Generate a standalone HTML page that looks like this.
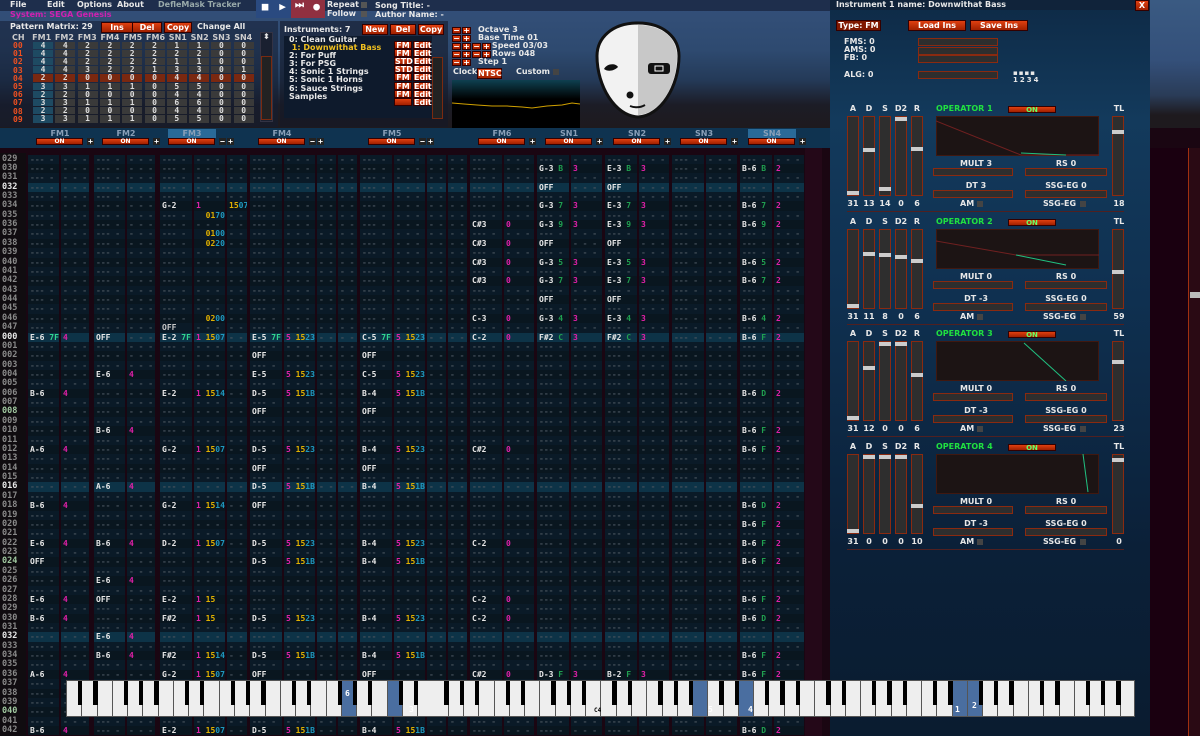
<!DOCTYPE html>
<html><head><meta charset="utf-8"><style>
*{margin:0;padding:0;box-sizing:border-box}
body{width:1200px;height:736px;overflow:hidden;background:#1a0612;font-family:"DejaVu Sans Mono","Liberation Mono",monospace;font-weight:bold;font-size:8px;color:#ddd;position:relative}
.a{position:absolute;white-space:nowrap}
.t{font-family:"DejaVu Sans","Liberation Sans",sans-serif;font-weight:bold;font-size:8px;color:#e8e8e8}
.btn{position:absolute;background:linear-gradient(#e04010,#a02000);border:1px solid #300;color:#fff;font-family:"DejaVu Sans",sans-serif;font-weight:bold;font-size:8px;text-align:center;line-height:9px}
.m{color:#e020a8}.y{color:#e0b000}.c{color:#2098c0}.g{color:#30d890}.gg{color:#20a050}.w{color:#e8e8e8}.o{color:#c8c8c8}
.cell{position:absolute;background:#0a1a27;color:#47525c;overflow:hidden;padding-left:2px;line-height:9.37px;height:9.37px}
.hl{background:#0d3347}
.sl{position:absolute;background:#2e2e2e;border:1px solid #8a2a10}
.hd{position:absolute;background:#ccc;height:4px;left:-1px;right:-1px}
.k{position:absolute;background:#eee;border-right:1px solid #555;top:0;height:35px;width:15.3px}
.bk{position:absolute;background:#000;top:0;height:24px;width:8px}
</style></head><body>
<div class="a" style="left:0;top:0;width:1200px;height:128px;background:linear-gradient(#34507a 0,#2e4a70 50px,#243a58 80px,#1c1c26 105px,#1e1a1e 128px)"></div>
<div class="a" style="left:0;top:0;width:830px;height:11px;background:#1e2e4c"></div>
<div class="a t" style="left:10px;top:0">File</div>
<div class="a t" style="left:47px;top:0">Edit</div>
<div class="a t" style="left:77px;top:0">Options</div>
<div class="a t" style="left:117px;top:0">About</div>
<div class="a t" style="left:158px;top:0;color:#9aa">DefleMask Tracker</div>
<div class="a" style="left:256px;top:0;width:18px;height:18px;background:#2a4a80;color:#fff;font-size:11px;text-align:center">■</div>
<div class="a" style="left:274px;top:0;width:17px;height:18px;background:#2a4a80;color:#fff;font-size:11px;text-align:center">▶</div>
<div class="a" style="left:291px;top:0;width:17px;height:18px;background:#903040;color:#fff;font-size:10px;text-align:center">⏭</div>
<div class="a" style="left:308px;top:0;width:17px;height:18px;background:#903040;color:#fff;font-size:11px;text-align:center">●</div>
<div class="a t" style="left:327px;top:0">Repeat</div><div class="a t" style="left:327px;top:9px">Follow</div>
<div class="a" style="left:361px;top:2px;width:6px;height:6px;background:#555"></div><div class="a" style="left:361px;top:11px;width:6px;height:6px;background:#555"></div>
<div class="a t" style="left:375px;top:1px">Song Title: -</div><div class="a t" style="left:375px;top:10px">Author Name: -</div>
<div class="a t" style="left:10px;top:10px;color:#d020b0">System: SEGA Genesis</div>
<div class="a" style="left:0;top:21px;width:278px;height:106px;background:rgba(20,30,50,.55)"></div>
<div class="a t" style="left:10px;top:22px">Pattern Matrix: 29</div>
<div class="btn" style="left:101px;top:22px;width:32px">Ins</div>
<div class="btn" style="left:132px;top:22px;width:30px">Del</div>
<div class="btn" style="left:164px;top:22px;width:28px">Copy</div>
<div class="a t" style="left:197px;top:22px">Change All</div>
<div class="a t" style="left:12px;top:33px;color:#ccc;word-spacing:1px">CH&nbsp;&nbsp;FM1 FM2 FM3 FM4 FM5 FM6 SN1 SN2 SN3 SN4</div>
<div class="a" style="left:260px;top:32px;width:13px;height:90px;background:#1a2030;border:1px solid #334"></div>
<div class="a" style="left:261px;top:56px;width:11px;height:64px;border:1px solid #7a2a10;background:#222"></div>
<div class="a t" style="left:263px;top:32px;font-size:8px">⬍</div>
<div class="a" style="left:280px;top:21px;width:168px;height:106px;background:rgba(20,25,40,.6)"></div>
<div class="a t" style="left:284px;top:25px">Instruments: 7</div>
<div class="btn" style="left:362px;top:24px;width:26px">New</div>
<div class="btn" style="left:390px;top:24px;width:26px">Del</div>
<div class="btn" style="left:418px;top:24px;width:26px">Copy</div>
<div class="a" style="left:284px;top:36px;width:148px;height:82px;background:#0e1a2c"></div>
<div class="a t" style="left:289px;top:36px;line-height:8.1px;font-size:8px">0: Clean Guitar<br><span style="color:#f0c020">&nbsp;1: Downwithat Bass</span><br>2: For Puff<br>3: For PSG<br>4: Sonic 1 Strings<br>5: Sonic 1 Horns<br>6: Sauce Strings<br>Samples</div>
<div class="a" style="left:432px;top:57px;width:11px;height:62px;border:1px solid #7a2a10;background:#222"></div>
<div class="a t" style="left:478px;top:26px;line-height:8px">Octave 3<br>Base Time 01<br>&nbsp;&nbsp;&nbsp;&nbsp;&nbsp;Speed 03/03<br>&nbsp;&nbsp;&nbsp;&nbsp;&nbsp;Rows 048<br>Step 1</div>
<div class="a t" style="left:453px;top:67px">Clock</div><div class="btn" style="left:477px;top:68px;width:25px">NTSC</div>
<div class="a t" style="left:516px;top:67px">Custom</div><div class="a" style="left:553px;top:69px;width:6px;height:6px;background:#444"></div>
<div class="a" style="left:452px;top:80px;width:128px;height:48px;background:linear-gradient(#0e4050,#000 40%,#000)"></div>
<svg class="a" style="left:452px;top:80px" width="128" height="48"><polyline fill="none" stroke="#d0a000" stroke-width="1" points="0,23 12,24 25,25 40,26 55,26 70,27 80,28 95,26 110,25 120,23 128,24"/></svg>
<svg class="a" style="left:592px;top:20px" width="92" height="100"><path d="M46 3C20 3 5 18 5 36c0 30 18 60 41 61 23-1 41-31 41-61C87 18 72 3 46 3z" fill="#f2f2f2" stroke="#111" stroke-width="3"/><path d="M46 5C70 5 85 18 85 36c0 30-17 58-39 59z" fill="#c8c8c8"/><path d="M12 49c3-6 12-6 14-2-4 4-10 5-14 2z" fill="#111"/><rect x="56" y="43" width="22" height="11" rx="3" fill="#111"/><rect x="63" y="46" width="8" height="5" fill="none" stroke="#fff"/><circle cx="38" cy="75" r="3.5" fill="#111"/><path d="M38 86q8 3 15-1" stroke="#111" stroke-width="2" fill="none"/></svg>
<div class="a" style="left:0;top:128px;width:830px;height:20px;background:#0f3350"></div>
<div class="a" style="left:0;top:148px;width:830px;height:588px;background:#1a0612"></div>
<div class="a" style="left:0;top:153px;width:26px;height:583px;background:#100c10"></div>
<div class="a" style="left:805px;top:148px;width:17px;height:588px;background:#240818"></div>
<div class="a" style="left:1150px;top:0;width:50px;height:128px;background:linear-gradient(#3a5a82,#34507a 60px,#2a3c58 95px,#1e1a1e 115px)"></div>
<div class="a" style="left:1150px;top:148px;width:50px;height:588px;background:#1a0010"></div>
<div class="a" style="left:1188px;top:148px;width:12px;height:588px;background:#2a0a14;border-left:1px solid #a03010"></div>
<div class="a" style="left:1190px;top:292px;width:10px;height:6px;background:#bbb"></div>
<div class="a" style="left:830px;top:0;width:320px;height:736px;background:linear-gradient(#0e2a46,#133a5c 120px,#0f3050 300px,#0b2038 550px,#0a1c30)"></div>
<div class="a" style="left:830px;top:0;width:320px;height:10px;background:#10233a"></div>
<div class="a t" style="left:836px;top:0">Instrument 1 name: Downwithat Bass</div>
<div class="btn" style="left:1135px;top:0;width:14px">X</div>
<div class="btn" style="left:836px;top:20px;width:45px;background:#801800">Type: FM</div>
<div class="btn" style="left:908px;top:20px;width:58px">Load Ins</div>
<div class="btn" style="left:970px;top:20px;width:58px">Save Ins</div>
<div class="a t" style="left:844px;top:38px;line-height:8.2px">FMS: 0<br>AMS: 0<br>FB: 0</div>
<div class="a t" style="left:844px;top:70px">ALG: 0</div>
<div class="sl" style="left:918px;top:38px;width:80px;height:8px"></div><div class="sl" style="left:918px;top:47px;width:80px;height:8px"></div><div class="sl" style="left:918px;top:55px;width:80px;height:8px"></div><div class="sl" style="left:918px;top:71px;width:80px;height:8px"></div>
<div class="a t" style="left:1013px;top:69px;font-size:7px;letter-spacing:1px">▪▪▪▪</div><div class="a t" style="left:1013px;top:76px;font-size:7px;letter-spacing:2px">1234</div>
<script>
function h(s){document.body.insertAdjacentHTML('beforeend',s)}
var M=[[4,4,2,2,2,2,1,1,0,0],[4,4,2,2,2,2,2,2,0,0],[4,4,2,2,2,2,1,1,0,0],[4,4,3,2,2,1,3,3,0,1],[2,2,0,0,0,0,4,4,0,0],[3,3,1,1,1,0,5,5,0,0],[2,2,0,0,0,0,4,4,0,0],[3,3,1,1,1,0,6,6,0,0],[2,2,0,0,0,0,4,4,0,0],[3,3,1,1,1,0,5,5,0,0]],s='';
for(var r=0;r<10;r++){var y=41+r*8.2;s+='<div class="a" style="left:13px;top:'+y+'px;color:#f05020;font-size:8px">0'+r+'</div>';
for(var c=0;c<10;c++){var bg=r==4?'#7a2810':(c==0?'#1e4a62':'#3a3a3a');s+='<div class="a" style="left:'+(33+c*22.3)+'px;top:'+(y+0.5)+'px;width:20px;height:7.4px;background:'+bg+';text-align:center;line-height:7.5px;color:#ddd">'+M[r][c]+'</div>';}}
h(s);
s='';var ty=['FM','FM','STD','STD','FM','FM','FM',''];for(var i=0;i<8;i++){s+='<div class="btn" style="left:394px;top:'+(41+i*8.1)+'px;width:18px;height:8px;line-height:7px">'+ty[i]+'</div><div class="btn" style="left:413px;top:'+(41+i*8.1)+'px;width:18px;height:8px;line-height:7px">Edit</div>'}h(s);
s='';var cy=[26,34,42,50,58],cn=[2,2,4,4,2];for(i=0;i<5;i++)for(var j=0;j<cn[i];j++)s+='<div class="btn" style="left:'+(452+j*10)+'px;top:'+(cy[i]+1)+'px;width:9px;height:7px;line-height:6px">'+(j%2?'+':'−')+'</div>';h(s);
var CH=[['FM1',28,92,0],['FM2',94,158,0],['FM3',160,248,1],['FM4',250,358,1],['FM5',360,468,1],['FM6',470,535,0],['SN1',537,603,0],['SN2',605,670,0],['SN3',672,738,0],['SN4',740,805,0]];
s='';CH.forEach(function(c,i){var lx=c[1]+8;
s+='<div class="a t" style="left:'+lx+'px;top:129px;width:48px;text-align:center;color:#8aa0b8;background:'+(i==2||i==9?'#2a6a98':'transparent')+'">'+c[0]+'</div>';
s+='<div class="btn" style="left:'+lx+'px;top:138px;width:47px;height:7px;line-height:6px;font-size:6px">ON</div>';
if(c[3])s+='<div class="a" style="left:'+(lx+51)+'px;top:138px;color:#fff;background:#222;width:7px;height:7px;line-height:7px;font-size:8px;text-align:center">−</div><div class="a" style="left:'+(lx+59)+'px;top:138px;color:#fff;background:#222;width:7px;height:7px;line-height:7px;font-size:8px;text-align:center">+</div>';
else s+='<div class="a" style="left:'+(lx+51)+'px;top:138px;color:#fff;background:#222;width:7px;height:7px;line-height:7px;font-size:8px;text-align:center">+</div>';});h(s);
var C=[[28,31],[61,28],[94,31],[127,28],[160,32],[194,31],[227,20],[250,32],[284,31],[317,19],[338,19],[360,32],[394,31],[427,19],[448,19],[470,32],[504,30],[537,32],[571,31],[605,32],[639,30],[672,32],[706,31],[740,32],[774,30]];
function n(t){return '<span class="w">'+t+'</span>'}
function nv(t,v){return n(t)+' <span class="g">'+v+'</span>'}
function f(i,a,b){return '<span class="m">'+i+'</span>'+(a?' <span class="y">'+a+'</span>':'')+(b?'<span class="c">'+b+'</span>':'')}
function sn(t,v){return n(t)+' <span class="gg">'+v+'</span>'}
var D={};function d(r,c,t){(D[r]=D[r]||{})[c]=t}
function snrow(i,v,p){d(i,17,sn('G-3',v));d(i,18,f(3));d(i,19,sn('E-3',v));d(i,20,f(3));if(p)d(i,23,sn('B-6',v)),d(i,24,f(2))}
snrow(1,'B',1);d(3,17,n('OFF'));d(3,19,n('OFF'));d(5,4,n('G-2'));d(5,5,f(1));d(5,6,'<span class="y">15</span><span class="c">07</span>');snrow(5,'7',1);
d(6,5,'&nbsp;&nbsp;<span class="y">01</span><span class="c">70</span>');d(7,15,n('C#3'));d(7,16,f(0,'17','01'));snrow(7,'9',1);
d(8,5,'&nbsp;&nbsp;<span class="y">01</span><span class="c">00</span>');d(9,5,'&nbsp;&nbsp;<span class="y">02</span><span class="c">20</span>');d(9,15,n('C#3'));d(9,16,f(0));d(9,17,n('OFF'));d(9,19,n('OFF'));
d(11,15,n('C#3'));d(11,16,f(0));snrow(11,'5',1);d(13,15,n('C#3'));d(13,16,f(0));snrow(13,'7',1);d(15,17,n('OFF'));d(15,19,n('OFF'));
d(17,5,'&nbsp;&nbsp;<span class="y">02</span><span class="c">00</span>');d(17,15,n('C-3'));d(17,16,f(0));snrow(17,'4',1);d(18,4,'<span class="o">OFF</span>');
var B=19;function m(r,c,t){d(B+r,c,t)}
m(0,0,nv('E-6','7F'));m(0,1,f(4,'15','17'));m(0,2,n('OFF'));m(0,4,nv('E-2','7F'));m(0,5,f(1,'15','07'));m(0,7,nv('E-5','7F'));m(0,8,f(5,'15','23'));m(0,11,nv('C-5','7F'));m(0,12,f(5,'15','23'));m(0,15,n('C-2'));m(0,16,f(0,'17','01'));m(0,17,sn('F#2','C'));m(0,18,f(3));m(0,19,sn('F#2','C'));m(0,20,f(3,'04','58'));m(0,23,sn('B-6','F'));m(0,24,f(2));
function p4(r,a,b,c,dd){m(r,7,n(a));if(b)m(r,8,f(5,'15',b));m(r,11,n(c));if(dd)m(r,12,f(5,'15',dd))}
p4(2,'OFF',0,'OFF',0);m(4,2,n('E-6'));m(4,3,f(4,'15','1F'));p4(4,'E-5','23','C-5','23');
m(6,0,n('B-6'));m(6,1,f(4));m(6,4,n('E-2'));m(6,5,f(1,'15','14'));p4(6,'D-5','1B','B-4','1B');m(6,23,sn('B-6','D'));m(6,24,f(2));
p4(8,'OFF',0,'OFF',0);m(10,2,n('B-6'));m(10,3,f(4));m(10,23,sn('B-6','F'));m(10,24,f(2));
m(12,0,n('A-6'));m(12,1,f(4));m(12,4,n('G-2'));m(12,5,f(1,'15','07'));p4(12,'D-5','23','B-4','23');m(12,15,n('C#2'));m(12,16,f(0));m(12,23,sn('B-6','F'));m(12,24,f(2));
p4(14,'OFF',0,'OFF',0);m(16,2,n('A-6'));m(16,3,f(4));p4(16,'D-5','1B','B-4','1B');
m(18,0,n('B-6'));m(18,1,f(4));m(18,4,n('G-2'));m(18,5,f(1,'15','14'));m(18,7,n('OFF'));m(18,23,sn('B-6','D'));m(18,24,f(2));m(20,23,sn('B-6','F'));m(20,24,f(2));
m(22,0,n('E-6'));m(22,1,f(4));m(22,2,n('B-6'));m(22,3,f(4));m(22,4,n('D-2'));m(22,5,f(1,'15','07'));p4(22,'D-5','23','B-4','23');m(22,15,n('C-2'));m(22,16,f(0));m(22,23,sn('B-6','F'));m(22,24,f(2));
m(24,0,n('OFF'));p4(24,'D-5','1B','B-4','1B');m(24,23,sn('B-6','F'));m(24,24,f(2));m(26,2,n('E-6'));m(26,3,f(4));
m(28,0,n('E-6'));m(28,1,f(4,'15','17'));m(28,2,n('OFF'));m(28,4,n('E-2'));m(28,5,f(1,'15'));m(28,15,n('C-2'));m(28,16,f(0));m(28,23,sn('B-6','F'));m(28,24,f(2));
m(30,0,n('B-6'));m(30,1,f(4));m(30,4,n('F#2'));m(30,5,f(1,'15'));p4(30,'D-5','23','B-4','23');m(30,15,n('C-2'));m(30,16,f(0));m(30,23,sn('B-6','D'));m(30,24,f(2));
m(32,2,n('E-6'));m(32,3,f(4,'15','1F'));m(34,2,n('B-6'));m(34,3,f(4));m(34,4,n('F#2'));m(34,5,f(1,'15','14'));p4(34,'D-5','1B','B-4','1B');m(34,23,sn('B-6','F'));m(34,24,f(2));
m(36,0,n('A-6'));m(36,1,f(4));m(36,4,n('G-2'));m(36,5,f(1,'15','07'));p4(36,'OFF',0,'OFF',0);m(36,15,n('C#2'));m(36,16,f(0));m(36,17,sn('D-3','F'));m(36,18,f(3));m(36,19,sn('B-2','F'));m(36,20,f(3,'04','00'));m(36,23,sn('B-6','F'));m(36,24,f(2));
m(42,0,n('B-6'));m(42,1,f(4));m(42,4,n('E-2'));m(42,5,f(1,'15','07'));p4(42,'D-5','1B','B-4','1B');m(42,23,sn('B-6','D'));m(42,24,f(2));
s='';for(var r=0;r<62;r++){var y=154.5+r*9.37;var num=r<19?29+r:r-19;var hl=(r>=19&&(num%16==0))||r==3;var ns=('00'+num).slice(-3);
var nc=hl?'#e8e8e8':((r>=19&&num%8==0)?'#a0c8a0':'#8a8a8a');
s+='<div class="a" style="left:2px;top:'+y+'px;line-height:9.37px;color:'+nc+';font-size:8.5px">'+ns+'</div>';
C.forEach(function(c,i){var isN=(i==0||i==2||i==4||i==7||i==11||i==15||i==17||i==19||i==21||i==23);var txt=(D[r]&&D[r][i])||(isN?'--- -':(c[1]<25?'- -':'- - -'));
s+='<div class="cell'+(hl?' hl':'')+'" style="left:'+c[0]+'px;top:'+y+'px;width:'+c[1]+'px;'+(r%2&&!hl?'background:#09161f':'')+'">'+txt+'</div>'});}
h(s);
var V=[[31,13,14,0,6,18,'MULT 3','DT 3',[1,.42,.94,0,.4],.13],[31,11,8,0,6,59,'MULT 0','DT -3',[1,.3,.32,.35,.4],.5],[31,12,0,0,6,23,'MULT 0','DT -3',[1,.33,0,0,.42],.2],[31,0,0,0,10,0,'MULT 0','DT -3',[1,0,0,0,.67],0]];
s='';V.forEach(function(o,k){var y0=103+k*112.5;['A','D','S','D2','R'].forEach(function(l,j){var x=847+j*16;
s+='<div class="a t" style="left:'+(x-3)+'px;top:'+(y0+1)+'px;width:18px;text-align:center">'+l+'</div><div class="sl" style="left:'+x+'px;top:'+(y0+13)+'px;width:12px;height:80px"><div class="hd" style="top:'+(o[8][j]*74)+'px"></div></div><div class="a t" style="left:'+(x-3)+'px;top:'+(y0+96)+'px;width:18px;text-align:center">'+o[j]+'</div>'});
s+='<div class="a t" style="left:1110px;top:'+(y0+1)+'px;width:18px;text-align:center">TL</div><div class="sl" style="left:1112px;top:'+(y0+13)+'px;width:12px;height:80px"><div class="hd" style="top:'+(o[9]*74+3)+'px"></div></div><div class="a t" style="left:1110px;top:'+(y0+96)+'px;width:18px;text-align:center">'+o[5]+'</div>';
s+='<div class="a t" style="left:936px;top:'+(y0+1)+'px;color:#20e040">OPERATOR '+(k+1)+'</div><div class="btn" style="left:1008px;top:'+(y0+3)+'px;width:48px;height:7px;line-height:6px;font-size:7px;color:#6f6">ON</div>';
s+='<div class="a" style="left:936px;top:'+(y0+13)+'px;width:163px;height:40px;background:#1c1414;border:1px solid #401810"></div>';
s+='<div class="a t" style="left:936px;top:'+(y0+56)+'px;width:80px;text-align:center">'+o[6]+'</div><div class="a t" style="left:1025px;top:'+(y0+56)+'px;width:82px;text-align:center">RS 0</div>';
s+='<div class="sl" style="left:933px;top:'+(y0+65)+'px;width:80px;height:8px"></div><div class="sl" style="left:1025px;top:'+(y0+65)+'px;width:82px;height:8px"></div>';
s+='<div class="a t" style="left:936px;top:'+(y0+78)+'px;width:80px;text-align:center">'+o[7]+'</div><div class="a t" style="left:1025px;top:'+(y0+78)+'px;width:82px;text-align:center">SSG-EG 0</div>';
s+='<div class="sl" style="left:933px;top:'+(y0+87)+'px;width:80px;height:8px"></div><div class="sl" style="left:1025px;top:'+(y0+87)+'px;width:82px;height:8px"></div>';
s+='<div class="a t" style="left:960px;top:'+(y0+96)+'px">AM</div><div class="a" style="left:977px;top:'+(y0+98)+'px;width:6px;height:6px;background:#444"></div><div class="a t" style="left:1043px;top:'+(y0+96)+'px">SSG-EG</div><div class="a" style="left:1080px;top:'+(y0+98)+'px;width:6px;height:6px;background:#444"></div>';
s+='<div class="a" style="left:847px;top:'+(y0+108)+'px;width:277px;height:1px;background:#502020"></div>';});
h(s);
h('<svg class="a" style="left:936px;top:116px" width="163" height="40"><path d="M0 5L85 39L163 39" stroke="#702020" fill="none"/><path d="M85 37L130 39" stroke="#20c080"/></svg><svg class="a" style="left:936px;top:229px" width="163" height="40"><path d="M0 12L80 26L163 26" stroke="#702020" fill="none"/><path d="M80 26L130 36" stroke="#20c080"/></svg><svg class="a" style="left:936px;top:341px" width="163" height="40"><path d="M88 2L130 40" stroke="#20c080"/></svg><svg class="a" style="left:936px;top:454px" width="163" height="40"><path d="M147 0L152 38" stroke="#20c080"/></svg>');
s='';for(i=0;i<70;i++){var bl=[18,21,41,44,58,59].indexOf(i)>=0;s+='<div class="k" style="left:'+(i*15.27)+'px;'+(bl?'background:#4a6ea0':'')+'"></div>';var p=i%7;if(p!=2&&p!=6)s+='<div class="bk" style="left:'+(i*15.27+11)+'px"></div>';}
h('<div class="a" style="left:66px;top:680px;width:1069px;height:37px;background:#eee;border:1px solid #555;z-index:20;overflow:hidden">'+s+'<div class="a" style="left:527px;top:26px;font-size:6px;color:#000">C4</div><div class="a" style="left:278px;top:8px;color:#fff">6</div><div class="a" style="left:342px;top:24px;color:#fff">3</div><div class="a" style="left:641px;top:24px;color:#fff">5</div><div class="a" style="left:681px;top:24px;color:#fff">4</div><div class="a" style="left:888px;top:24px;color:#fff">1</div><div class="a" style="left:905px;top:20px;color:#fff">2</div></div>');
</script>
</body></html>
